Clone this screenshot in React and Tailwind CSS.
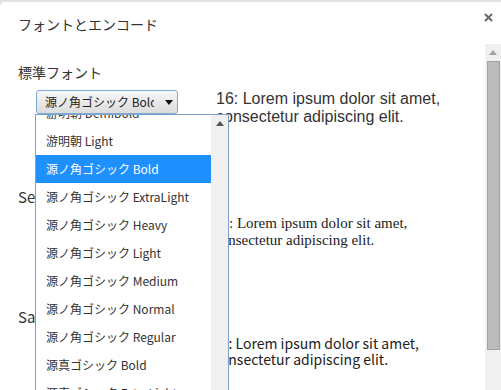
import React from "react";

const jp = { fontFamily: '"Noto Sans CJK JP", "Noto Sans", sans-serif' };

function Select() {
  return (
    <div className="w-[142px] h-[24px] border border-[#7fa9d6] rounded-[3px] bg-linear-to-b from-[#f7f7f7] to-[#dcdcdc] flex items-center pl-[8px] text-[12px] text-[#222]">
      <span className="w-[109px] overflow-hidden whitespace-nowrap leading-[22px]">源ノ角ゴシック Bold</span>
      <svg className="ml-[11px]" width="8" height="5" viewBox="0 0 8 5">
        <path d="M0 0 L8 0 L4 5 Z" fill="#111" />
      </svg>
    </div>
  );
}

export default function App() {
  const items = [
    "游明朝 Demibold",
    "游明朝 Light",
    "源ノ角ゴシック Bold",
    "源ノ角ゴシック ExtraLight",
    "源ノ角ゴシック Heavy",
    "源ノ角ゴシック Light",
    "源ノ角ゴシック Medium",
    "源ノ角ゴシック Normal",
    "源ノ角ゴシック Regular",
    "源真ゴシック Bold",
    "源真ゴシック ExtraLight",
  ];
  return (
    <div className="w-[501px] h-[390px] overflow-hidden bg-[#e2e2e2] pt-[2px]" style={jp}>
      <div className="relative h-[388px] bg-white rounded-tl-[5px] flex flex-col">
        <div className="h-[42px] pl-[18px] pt-[12px] text-[14px] leading-[20px] text-[#333]">
          フォントとエンコード
        </div>
        <button className="absolute left-[483px] top-[10px] w-[10px] h-[10px] flex items-center justify-center">
          <svg width="9" height="9" viewBox="0 0 9 9">
            <path d="M1 1 L8 8 M8 1 L1 8" stroke="#6a6a6a" strokeWidth="2" />
          </svg>
        </button>
        <div className="flex flex-1 min-h-0">
          <div className="flex-1 flex flex-col pt-[18px] text-[#333]">
            <div className="pl-[18px] text-[14px] leading-[20px]">標準フォント</div>
            <div className="flex mt-[8px] pl-[36px] pr-[18px]">
              <div className="w-[180px] shrink-0">
                <Select />
              </div>
              <div className="flex-1 text-[16px] leading-[18px] text-[#333]" style={{ fontFamily: '"Liberation Sans", Arial, sans-serif' }}>
                16: Lorem ipsum dolor sit amet, consectetur adipiscing elit.
              </div>
            </div>
            <div className="pl-[18px] mt-[61px] text-[15px] leading-[20px] whitespace-nowrap">Serif フォント</div>
            <div className="flex mt-[8px] pl-[36px] pr-[18px]">
              <div className="w-[180px] shrink-0">
                <Select />
              </div>
              <div className="flex-1 ml-[-2px] text-[15px] leading-[17px] text-[#222]" style={{ fontFamily: '"Liberation Serif", "Times New Roman", serif' }}>
                16: Lorem ipsum dolor sit amet, consectetur adipiscing elit.
              </div>
            </div>
            <div className="pl-[18px] mt-[58px] text-[15px] leading-[20px] whitespace-nowrap">Sans Serif フォント</div>
            <div className="flex mt-[8px] pl-[36px] pr-[18px]">
              <div className="w-[180px] shrink-0">
                <Select />
              </div>
              <div className="flex-1 ml-[-3px] text-[14px] leading-[16px] text-[#222]" style={jp}>
                16: Lorem ipsum dolor sit amet, consectetur adipiscing elit.
              </div>
            </div>
          </div>
          <div className="w-[16px] bg-[#f0f0f0] flex flex-col">
            <div className="h-[17px] flex items-center justify-center">
              <svg width="8" height="5" viewBox="0 0 8 5">
                <path d="M0 5 L8 5 L4 0 Z" fill="#a3a3a3" />
              </svg>
            </div>
            <div className="ml-[2px] w-[13px] h-[289px] bg-[#bcbcbc] border border-[#a2a2a2]" />
          </div>
        </div>
        <div className="absolute left-[35px] top-[112px] w-[194px] h-[290px] border border-[#7f9fc5] bg-white flex overflow-hidden">
          <div className="w-[175px] flex flex-col mt-[-16px]">
            {items.map((t, i) => (
              <div
                key={i}
                className={
                  "h-[28px] shrink-0 pl-[10px] text-[12px] leading-[28px] whitespace-nowrap " +
                  (i === 2 ? "bg-[#1e90ff] text-white" : "text-[#333]")
                }
              >
                {t}
              </div>
            ))}
          </div>
          <div className="w-[17px] bg-[#f0f0f0] flex flex-col items-center">
            <div className="h-[17px] flex items-center justify-center">
              <svg width="8" height="5" viewBox="0 0 8 5">
                <path d="M0 5 L8 5 L4 0 Z" fill="#555" />
              </svg>
            </div>
          </div>
        </div>
      </div>
    </div>
  );
}
